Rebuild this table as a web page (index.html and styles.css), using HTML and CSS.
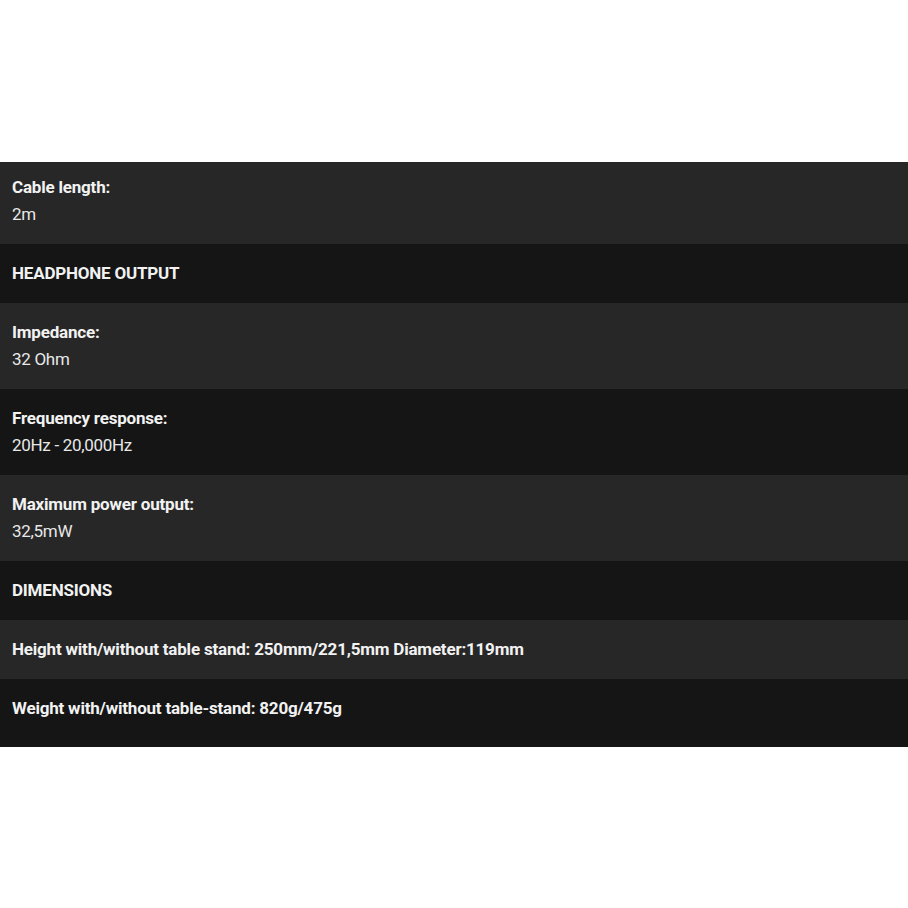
FILE: index.html
```html
<!DOCTYPE html>
<html lang="en">
<head>
    <meta name="viewport" content="width=device-width, initial-scale=1">
    <title>Specifications</title>
    <link rel="stylesheet" href="styles.css">
</head>
<body>
    <div class="specs">
        <div class="spec-row first">
            <div class="spec-label">Cable length:</div>
            <div class="spec-value">2m</div>
        </div>
        <div class="spec-row dark">
            <div class="spec-label">HEADPHONE OUTPUT</div>
        </div>
        <div class="spec-row">
            <div class="spec-label">Impedance:</div>
            <div class="spec-value">32 Ohm</div>
        </div>
        <div class="spec-row dark">
            <div class="spec-label">Frequency response:</div>
            <div class="spec-value">20Hz - 20,000Hz</div>
        </div>
        <div class="spec-row">
            <div class="spec-label">Maximum power output:</div>
            <div class="spec-value">32,5mW</div>
        </div>
        <div class="spec-row dark">
            <div class="spec-label">DIMENSIONS</div>
        </div>
        <div class="spec-row">
            <div class="spec-label">Height with/without table stand: 250mm/221,5mm Diameter:119mm</div>
        </div>
        <div class="spec-row dark last">
            <div class="spec-label">Weight with/without table-stand: 820g/475g</div>
        </div>
    </div>
</body>
</html>
```

FILE: styles.css
```css
body {
    font-family: 'Roboto', 'Liberation Sans', sans-serif;
    margin: 0;
    padding: 162px 0 0;
    background-color: #ffffff;
}

.specs {
    width: 100%;
}

.spec-row {
    background-color: #272727;
    padding: 16px 12px;
    font-size: 17px;
    line-height: 27px;
}

.spec-row.dark {
    background-color: #151515;
}

.spec-row.first {
    padding-top: 12px;
}

.spec-row.last {
    padding-bottom: 25px;
}

.spec-label {
    color: #f2f2f2;
    font-weight: 700;
    letter-spacing: -0.2px;
}

.spec-value {
    color: #e8e8e8;
    letter-spacing: -0.3px;
}
```
